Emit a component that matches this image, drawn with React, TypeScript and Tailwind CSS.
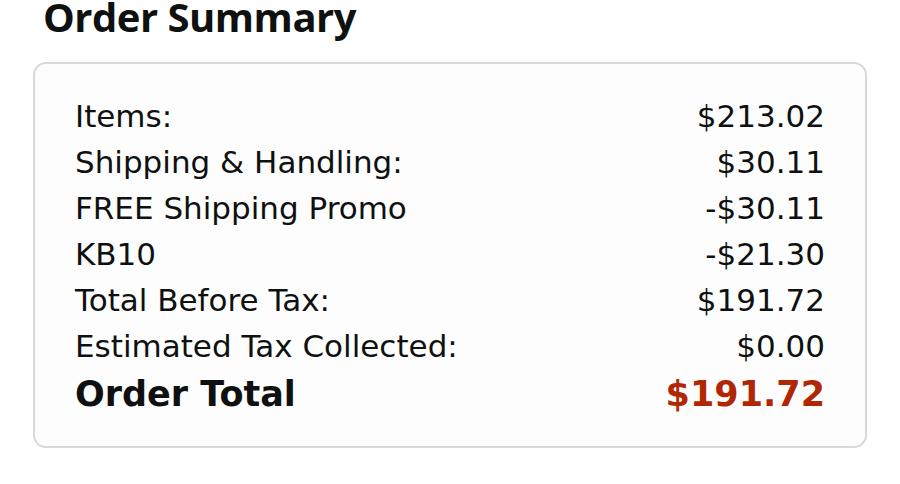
import React from "react";

interface Line {
  label: string;
  amount: string;
}

const lines: Line[] = [
  { label: "Items:", amount: "$213.02" },
  { label: "Shipping & Handling:", amount: "$30.11" },
  { label: "FREE Shipping Promo", amount: "-$30.11" },
  { label: "KB10", amount: "-$21.30" },
  { label: "Total Before Tax:", amount: "$191.72" },
  { label: "Estimated Tax Collected:", amount: "$0.00" },
];

const App: React.FC = () => {
  return (
    <div className="w-[900px] h-[484px] overflow-hidden bg-white text-[#0f1111]">
      <div className="px-[33px]">
        <h1
          className="ml-[10px] text-[40px] font-bold leading-[32px] tracking-[-0.5px] pt-[1px]"
          style={{ fontFamily: '"Open Sans", "Noto Sans", sans-serif' }}
        >
          Order Summary
        </h1>
        <div
          className="mt-[29px] rounded-[13px] border-2 border-[#d9d9d9] bg-[#fdfdfd] pt-[29px] pb-[27px] px-[40px]"
          style={{ fontFamily: '"DejaVu Sans", "Open Sans", sans-serif' }}
        >
          {lines.map((line) => (
            <div
              key={line.label}
              className="flex justify-between text-[31px] leading-[46px]"
            >
              <span>{line.label}</span>
              <span>{line.amount}</span>
            </div>
          ))}
          <div className="flex justify-between text-[35px] font-bold leading-[50px]">
            <span>Order Total</span>
            <span className="text-[#b12704]">$191.72</span>
          </div>
        </div>
      </div>
    </div>
  );
};

export default App;
